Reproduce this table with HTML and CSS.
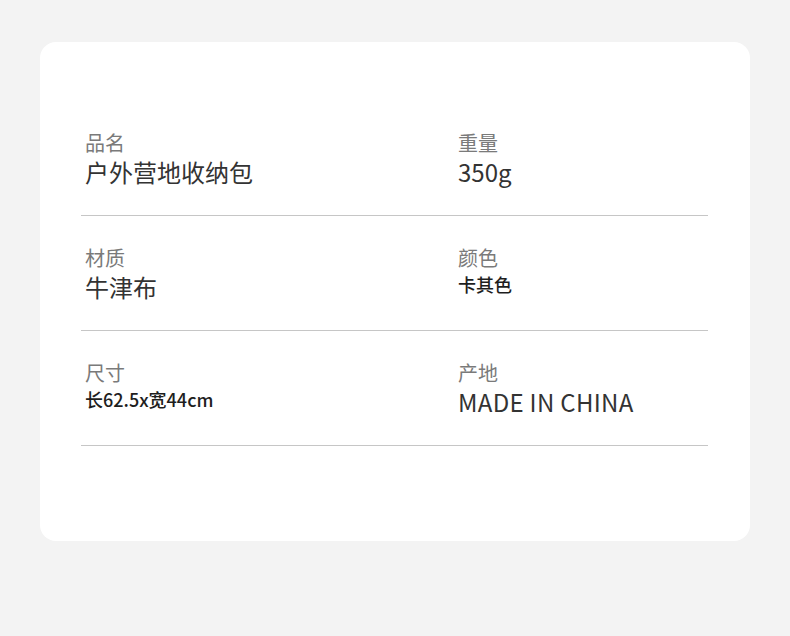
FILE: index.html
```html
<!DOCTYPE html>
<html lang="zh-CN">
<head>
<meta charset="utf-8">
<title>产品参数</title>
<link rel="stylesheet" href="styles.css">
</head>
<body>
<main class="page">
  <section class="card">
    <div class="row">
      <div class="cell">
        <div class="label">品名</div>
        <div class="value">户外营地收纳包</div>
      </div>
      <div class="cell">
        <div class="label">重量</div>
        <div class="value">350g</div>
      </div>
    </div>
    <div class="row">
      <div class="cell">
        <div class="label">材质</div>
        <div class="value">牛津布</div>
      </div>
      <div class="cell">
        <div class="label">颜色</div>
        <div class="value value-small">卡其色</div>
      </div>
    </div>
    <div class="row">
      <div class="cell">
        <div class="label">尺寸</div>
        <div class="value value-small">长62.5x宽44cm</div>
      </div>
      <div class="cell">
        <div class="label">产地</div>
        <div class="value value-latin">MADE IN CHINA</div>
      </div>
    </div>
  </section>
</main>
</body>
</html>
```
FILE: styles.css
```css
html, body {
  margin: 0;
  padding: 0;
  background: #f3f3f3;
}
body {
  font-family: "Noto Sans CJK SC", "Noto Sans", sans-serif;
}
.page {
  width: 790px;
  height: 636px;
  padding: 42px 0 0 40px;
  box-sizing: border-box;
}
.card {
  width: 710px;
  height: 499px;
  box-sizing: border-box;
  background: #ffffff;
  border-radius: 16px;
  padding: 59px 42px 0 41px;
}
.row {
  display: grid;
  grid-template-columns: 373px 1fr;
  align-items: start;
  padding: 29px 0 27px;
  border-bottom: 1px solid #c6c6c6;
}
.cell {
  padding-left: 4px;
}
.label {
  font-size: 20px;
  line-height: 26px;
  color: #7a7a7a;
}
.value {
  font-size: 24px;
  line-height: 32px;
  color: #333333;
}
.value-small {
  font-size: 18px;
  line-height: 26px;
  font-weight: 500;
  color: #1e1e1e;
}
.value-latin {
  letter-spacing: 0.3px;
}
```
